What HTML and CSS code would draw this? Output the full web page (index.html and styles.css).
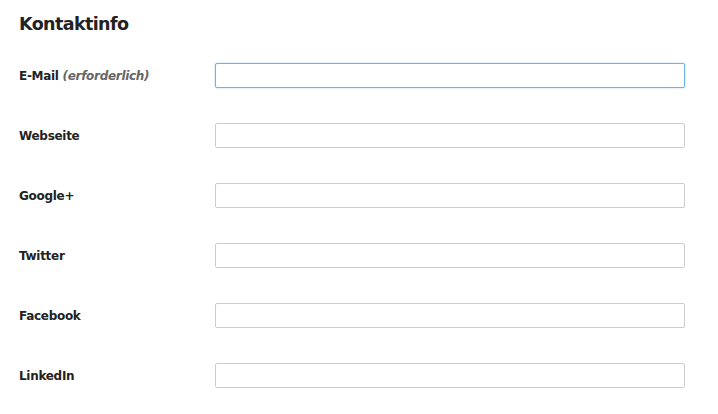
FILE: index.html
```html
<!DOCTYPE html>
<html lang="de">
<head>
<meta charset="utf-8">
<link rel="stylesheet" href="styles.css">
</head>
<body>
<section class="contact">
  <h2 class="title">Kontaktinfo</h2>
  <form class="form">
    <div class="row">
      <label class="label" for="email">E-Mail <em class="req">(erforderlich)</em></label>
      <input class="field focused" id="email" type="text">
    </div>
    <div class="row">
      <label class="label" for="web">Webseite</label>
      <input class="field" id="web" type="text">
    </div>
    <div class="row">
      <label class="label" for="gplus">Google+</label>
      <input class="field" id="gplus" type="text">
    </div>
    <div class="row">
      <label class="label" for="tw">Twitter</label>
      <input class="field" id="tw" type="text">
    </div>
    <div class="row">
      <label class="label" for="fb">Facebook</label>
      <input class="field" id="fb" type="text">
    </div>
    <div class="row">
      <label class="label" for="li">LinkedIn</label>
      <input class="field" id="li" type="text">
    </div>
  </form>
</section>
</body>
</html>
```
FILE: styles.css
```css
html, body {
  margin: 0;
  background: #fff;
}
body {
  font-family: "DejaVu Sans", Verdana, sans-serif;
  color: #222;
}
.contact {
  padding: 12px 33px 0 19px;
}
.title {
  margin: 0 0 27px;
  font-size: 17.5px;
  letter-spacing: -0.6px;
  line-height: 24px;
  font-weight: bold;
  color: #222;
}
.form {
  display: flex;
  flex-direction: column;
  gap: 35px;
}
.row {
  display: grid;
  grid-template-columns: 196px 1fr;
  align-items: center;
}
.label {
  font-size: 12px;
  letter-spacing: -0.3px;
  font-weight: bold;
  color: #222;
}
.req {
  font-style: italic;
  color: #666;
}
.field {
  box-sizing: border-box;
  height: 25px;
  width: 100%;
  margin: 0;
  border: 1px solid #ccc;
  border-radius: 2px;
  background: #fff;
  outline: none;
  padding: 0 6px;
}
.field.focused {
  border-color: #6cb3ec;
  box-shadow: 0 0 2px rgba(108, 179, 236, 0.6);
}
```
